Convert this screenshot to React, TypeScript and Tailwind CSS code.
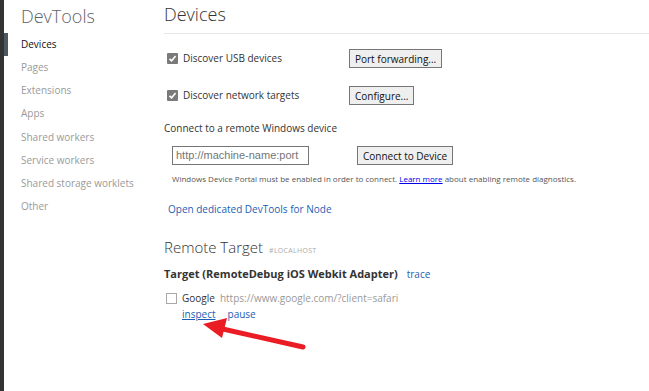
import React from 'react';

const font = { fontFamily: '"Open Sans", "Noto Sans", sans-serif' };

function CheckedBox() {
  return (
    <span className="w-[11px] h-[11px] bg-[#7a7a7a] rounded-[1px] flex items-center justify-center shrink-0">
      <svg width="9" height="9" viewBox="0 0 9 9">
        <path d="M1.5 4.8 L3.6 6.8 L7.6 2" stroke="#fff" strokeWidth="1.6" fill="none" />
      </svg>
    </span>
  );
}

const btnCls = 'h-[19px] px-[5px] border border-[#767676] bg-[#efefef] text-[10px] text-[#111] leading-none';

export default function App() {
  const nav = ['Devices', 'Pages', 'Extensions', 'Apps', 'Shared workers', 'Service workers', 'Shared storage worklets', 'Other'];

  return (
    <div className="w-[649px] h-[391px] bg-white flex overflow-hidden relative" style={font}>
      <div className="w-[4px] bg-[#333333] shrink-0" />

      {/* sidebar */}
      <div className="w-[160px] shrink-0 pt-[4px]">
        <div className="pl-[17px] text-[18px] leading-[24px] text-[#5f6368] font-light">DevTools</div>
        <div className="mt-[5px]">
          {nav.map((n, i) => (
            <div key={n} className="flex items-center h-[23.15px]">
              <div className={`w-[4px] h-[23px] ${i === 0 ? 'bg-[#4e5660]' : ''}`} />
              <div className={`pl-[13px] text-[10px] ${i === 0 ? 'text-[#111]' : 'text-[#9a9a9a]'}`}>{n}</div>
            </div>
          ))}
        </div>
      </div>

      {/* main */}
      <div className="flex-1 pt-[2px]">
        <div className="text-[18px] leading-[24px] text-[#333] font-light">Devices</div>
        <div className="h-px bg-[#e8e8e8] mt-[7px]" />

        <div className="pl-[3px] mt-[15px] text-[10px] text-[#333]">
          <div className="flex items-center h-[19px]">
            <div className="w-[182px] flex items-center gap-[5px]">
              <CheckedBox />
              <span>Discover USB devices</span>
            </div>
            <button className={btnCls}>Port forwarding...</button>
          </div>
          <div className="flex items-center h-[19px] mt-[18px]">
            <div className="w-[182px] flex items-center gap-[5px]">
              <CheckedBox />
              <span>Discover network targets</span>
            </div>
            <button className={btnCls}>Configure...</button>
          </div>
        </div>

        <div className="mt-[16px] text-[10px] text-[#333]">Connect to a remote Windows device</div>
        <div className="flex items-center mt-[10px] pl-[8px]">
          <div className="w-[137px] h-[19px] border border-[#767676] flex items-center px-[3px] text-[11px] text-[#757575]" style={{ fontFamily: '"Liberation Sans", Arial, sans-serif' }}>
            http://machine-name:port
          </div>
          <button className={`ml-[48px] ${btnCls}`}>Connect to Device</button>
        </div>
        <div className="pl-[8px] mt-[8px] text-[8px] text-[#555]">
          Windows Device Portal must be enabled in order to connect. <span className="text-[#0000ee] underline">Learn more</span> about enabling remote diagnostics.
        </div>
        <div className="pl-[4px] mt-[17px] text-[10px] text-[#1a5fb4]">Open dedicated DevTools for Node</div>

        <div className="mt-[19px] flex items-baseline gap-[6px]">
          <span className="text-[15px] text-[#333] font-light">Remote Target</span>
          <span className="text-[7px] text-[#aaa] tracking-[0.3px]">#LOCALHOST</span>
        </div>
        <div className="mt-[7px] flex items-baseline gap-[9px]">
          <span className="text-[11px] font-bold text-[#333]">Target (RemoteDebug iOS Webkit Adapter)</span>
          <span className="text-[10px] text-[#1a5fb4]">trace</span>
        </div>
        <div className="mt-[9px] pl-[2px] flex items-center gap-[5px] text-[10px]">
          <span className="w-[11px] h-[11px] border border-[#a8a8a8] bg-white shrink-0" />
          <span className="text-[#333]">Google</span>
          <span className="text-[#999]">https://www.google.com/?client=safari</span>
        </div>
        <div className="pl-[18px] flex gap-[12px] text-[10px] leading-[14px] mt-px">
          <span className="text-[#1a5fb4] underline">inspect</span>
          <span className="text-[#1a5fb4]">pause</span>
        </div>
      </div>

      <svg className="absolute left-0 top-0" width="649" height="391" viewBox="0 0 649 391">
        <path d="M303 347 L214 327" stroke="#ea1c24" strokeWidth="5" strokeLinecap="round" fill="none" />
        <path d="M203 324 L227 318 L222 338 Z" fill="#ea1c24" />
      </svg>
    </div>
  );
}
